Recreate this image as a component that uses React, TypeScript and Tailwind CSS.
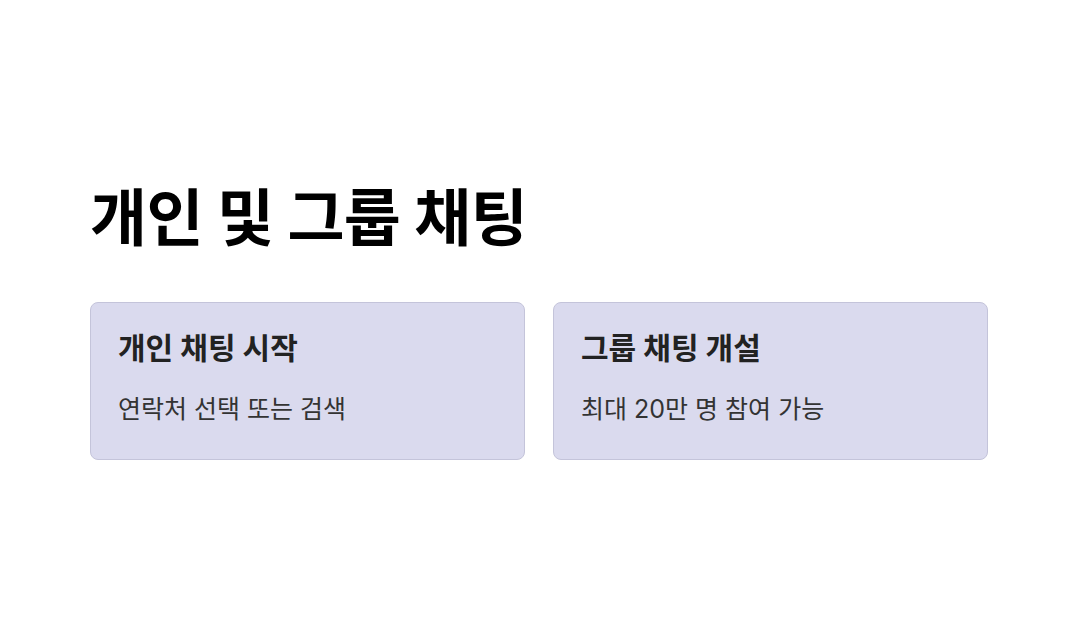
export default function App() {
  return (
    <div
      className="w-[1078px] h-[636px] bg-white flex flex-col justify-center px-[90px] pt-[6px]"
      style={{ fontFamily: 'Inter, "Noto Sans CJK KR", sans-serif' }}
    >
      <h1 className="text-[62px] font-bold leading-[1.2] text-black tracking-[-0.01em]">개인 및 그룹 채팅</h1>
      <div className="mt-[46px] grid grid-cols-2 gap-[28px]">
        <div className="bg-[#dadaee] border border-[#c4c4da] rounded-[8px] px-[27px] pt-[26px] pb-[34px]">
          <div className="text-[30px] font-bold text-[#222222] leading-[1.3]">개인 채팅 시작</div>
          <div className="mt-[25px] text-[25px] text-[#333333] leading-[1.3]">연락처 선택 또는 검색</div>
        </div>
        <div className="bg-[#dadaee] border border-[#c4c4da] rounded-[8px] px-[27px] pt-[26px] pb-[34px]">
          <div className="text-[30px] font-bold text-[#222222] leading-[1.3]">그룹 채팅 개설</div>
          <div className="mt-[25px] text-[25px] text-[#333333] leading-[1.3]">최대 20만 명 참여 가능</div>
        </div>
      </div>
    </div>
  );
}
